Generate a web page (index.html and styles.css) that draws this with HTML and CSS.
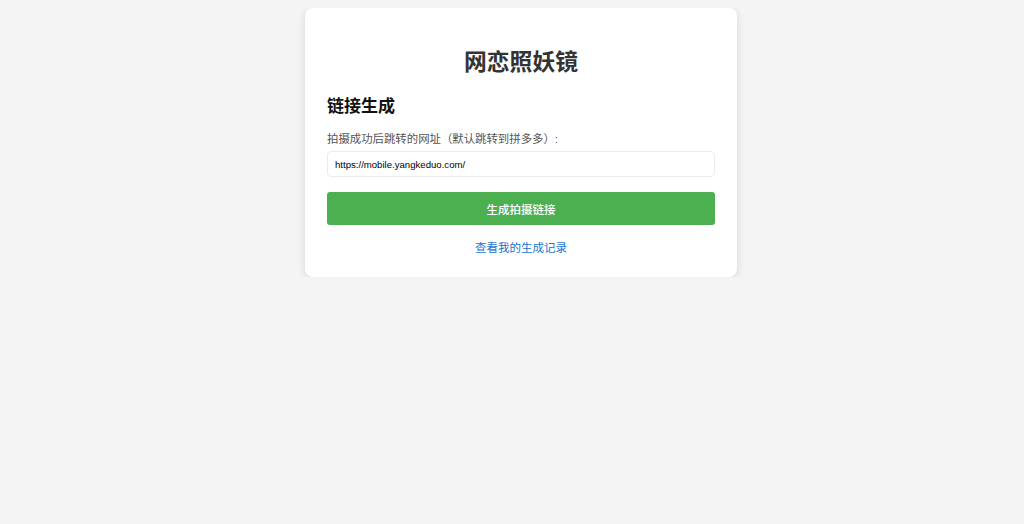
FILE: index.html
```html
<!DOCTYPE html>
<html lang="zh-CN">
<head>
<meta charset="utf-8">
<title>网恋照妖镜</title>
<link rel="stylesheet" href="styles.css">
</head>
<body>
<div class="card">
  <h1 class="title">网恋照妖镜</h1>
  <h2 class="section">链接生成</h2>
  <label class="label" for="url">拍摄成功后跳转的网址（默认跳转到拼多多）:</label>
  <input class="input" id="url" type="text" value="https://mobile.yangkeduo.com/">
  <button class="btn" type="button">生成拍摄链接</button>
  <a class="link" href="#">查看我的生成记录</a>
</div>
</body>
</html>
```

FILE: styles.css
```css
html, body {
  background: #f4f4f4;
}
body {
  margin: 8px 0 0 18px;
  font-family: "Liberation Sans", "Noto Sans CJK SC", sans-serif;
}
.card {
  box-sizing: border-box;
  width: 432px;
  margin: 0 auto;
  background: #fff;
  border-radius: 8px;
  box-shadow: 0 2px 8px rgba(0, 0, 0, 0.12);
  padding: 20px 22px 20px;
  display: flex;
  flex-direction: column;
}
.title {
  margin: 18px 0 0;
  font-size: 22.8px;
  line-height: 29px;
  font-weight: bold;
  color: #333;
  text-align: center;
  font-family: "Noto Sans CJK SC", sans-serif;
}
.section {
  margin: 18px 0 0;
  font-size: 17px;
  line-height: 24px;
  font-weight: bold;
  color: #111;
  font-family: "Noto Sans CJK SC", sans-serif;
}
.label {
  margin: 12px 0 2px;
  font-size: 11.4px;
  line-height: 20px;
  color: #555;
  font-family: "Liberation Sans", "Noto Sans CJK SC", sans-serif;
}
.input {
  box-sizing: border-box;
  height: 26px;
  width: 100%;
  border: 1px solid #ebebeb;
  border-radius: 4px;
  padding: 0 7px;
  font-family: "Liberation Sans", sans-serif;
  font-size: 9.6px;
  color: #000;
  background: #fff;
}
.btn {
  margin-top: 15px;
  height: 33px;
  width: 100%;
  border: none;
  border-radius: 3px;
  background: #4caf50;
  color: #fff;
  font-size: 11.5px;
  font-weight: 500;
  font-family: "Noto Sans CJK SC", sans-serif;
}
.link {
  margin-top: 12px;
  font-size: 11.5px;
  line-height: 20px;
  text-align: center;
  color: #1a73d1;
  text-decoration: none;
  font-family: "Noto Sans CJK SC", sans-serif;
}
```
